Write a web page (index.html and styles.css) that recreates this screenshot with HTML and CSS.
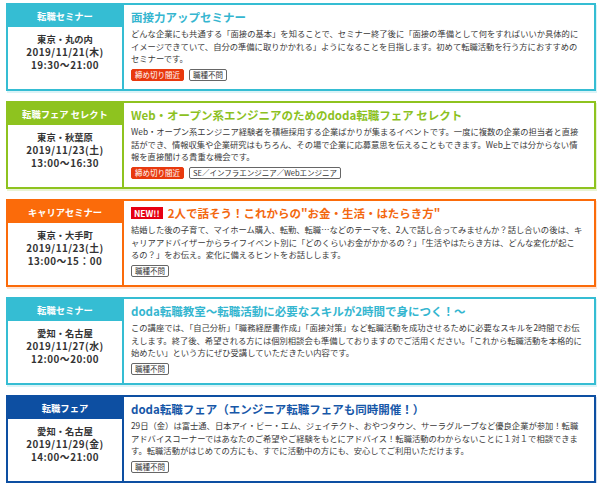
FILE: index.html
```html
<!DOCTYPE html>
<html lang="ja">
<head>
<meta charset="utf-8">
<title>イベント一覧</title>
<link rel="stylesheet" href="styles.css">
</head>
<body>
<div class="list">
  <div class="card teal">
    <div class="side">
      <div class="side-head">転職セミナー</div>
      <div class="side-body">
        <div>東京・丸の内</div>
        <div class="num">2019/11/21(木)</div>
        <div class="num">19:30〜21:00</div>
      </div>
    </div>
    <div class="main">
      <div class="title">面接力アップセミナー</div>
      <p class="desc">どんな企業にも共通する「面接の基本」を知ることで、セミナー終了後に「面接の準備として何をすればいいか具体的にイメージできていて、自分の準備に取りかかれる」ようになることを目指します。初めて転職活動を行う方におすすめのセミナーです。</p>
      <div class="tags"><span class="tag tag-red">締め切り間近</span><span class="tag">職種不問</span></div>
    </div>
  </div>

  <div class="card green">
    <div class="side">
      <div class="side-head">転職フェア セレクト</div>
      <div class="side-body">
        <div>東京・秋葉原</div>
        <div class="num">2019/11/23(土)</div>
        <div class="num">13:00〜16:30</div>
      </div>
    </div>
    <div class="main">
      <div class="title">Web・オープン系エンジニアのためのdoda転職フェア セレクト</div>
      <p class="desc">Web・オープン系エンジニア経験者を積極採用する企業ばかりが集まるイベントです。一度に複数の企業の担当者と直接話ができ、情報収集や企業研究はもちろん、その場で企業に応募意思を伝えることもできます。Web上では分からない情報を直接聞ける貴重な機会です。</p>
      <div class="tags"><span class="tag tag-red">締め切り間近</span><span class="tag">SE／インフラエンジニア／Webエンジニア</span></div>
    </div>
  </div>

  <div class="card orange">
    <div class="side">
      <div class="side-head">キャリアセミナー</div>
      <div class="side-body">
        <div>東京・大手町</div>
        <div class="num">2019/11/23(土)</div>
        <div class="num">13:00〜15：00</div>
      </div>
    </div>
    <div class="main">
      <div class="title"><span class="new">NEW!!</span>2人で話そう！これからの"お金・生活・はたらき方"</div>
      <p class="desc">結婚した後の子育て、マイホーム購入、転勤、転職…などのテーマを、2人で話し合ってみませんか？話し合いの後は、キャリアアドバイザーからライフイベント別に「どのくらいお金がかかるの？」「生活やはたらき方は、どんな変化が起こるの？」をお伝え。変化に備えるヒントをお話しします。</p>
      <div class="tags"><span class="tag">職種不問</span></div>
    </div>
  </div>

  <div class="card teal">
    <div class="side">
      <div class="side-head">転職セミナー</div>
      <div class="side-body">
        <div>愛知・名古屋</div>
        <div class="num">2019/11/27(水)</div>
        <div class="num">12:00〜20:00</div>
      </div>
    </div>
    <div class="main">
      <div class="title">doda転職教室〜転職活動に必要なスキルが2時間で身につく！〜</div>
      <p class="desc">この講座では、「自己分析」「職務経歴書作成」「面接対策」など転職活動を成功させるために必要なスキルを2時間でお伝えします。終了後、希望される方には個別相談会も準備しておりますのでご活用ください。「これから転職活動を本格的に始めたい」という方にぜひ受講していただきたい内容です。</p>
      <div class="tags"><span class="tag">職種不問</span></div>
    </div>
  </div>

  <div class="card blue">
    <div class="side">
      <div class="side-head">転職フェア</div>
      <div class="side-body">
        <div>愛知・名古屋</div>
        <div class="num">2019/11/29(金)</div>
        <div class="num">14:00〜21:00</div>
      </div>
    </div>
    <div class="main">
      <div class="title">doda転職フェア（エンジニア転職フェアも同時開催！）</div>
      <p class="desc">29日（金）は富士通、日本アイ・ビー・エム、ジェイテクト、おやつタウン、サーラグループなど優良企業が参加！転職アドバイスコーナーではあなたのご希望やご経験をもとにアドバイス！転職活動のわからないことに１対１で相談できます。転職活動がはじめての方にも、すでに活動中の方にも、安心してご利用いただけます。</p>
      <div class="tags"><span class="tag">職種不問</span></div>
    </div>
  </div>
</div>
</body>
</html>
```
FILE: styles.css
```css
html, body {
  margin: 0;
  padding: 0;
  background: #fff;
}
body {
  font-family: "Noto Sans CJK JP", "Noto Sans", sans-serif;
  color: #333;
}
.list {
  display: flex;
  flex-direction: column;
  gap: 10px;
  padding: 3px 3px 0 6px;
}
.card {
  --c: #35bdd3;
  --shadow: rgba(53, 189, 211, 0.18);
  display: flex;
  width: 590px;
  height: 88px;
  box-sizing: border-box;
  border: 2px solid var(--c);
  box-shadow: 1px 2px 0 var(--shadow);
}
.card.teal { --c: #35bdd3; --shadow: rgba(53, 189, 211, 0.18); --t: #35b6d0; }
.card.green { --c: #8ec31f; --shadow: rgba(142, 195, 31, 0.2); --t: #8cc11f; }
.card.orange { --c: #fb6b0a; --shadow: rgba(251, 107, 10, 0.18); --t: #f3680f; }
.card.blue { --c: #0d4fa2; --shadow: rgba(13, 79, 162, 0.18); --t: #1657a8; }

.side {
  width: 116px;
  flex: none;
  box-sizing: border-box;
  border-right: 2px solid var(--c);
  display: flex;
  flex-direction: column;
}
.side-head {
  height: 22px;
  background: var(--c);
  color: #fff;
  font-weight: bold;
  font-size: 9.3px;
  display: flex;
  align-items: center;
  justify-content: center;
}
.side-body {
  flex: 1;
  padding-top: 6px;
  text-align: center;
  font-weight: bold;
  font-size: 9.3px;
  line-height: 13px;
  color: #333;
}
.side-body .num {
  font-size: 9.8px;
  letter-spacing: 0.5px;
}
.main {
  flex: 1;
  min-width: 0;
  padding: 3px 11px 0 7px;
}
.title {
  font-size: 11.5px;
  line-height: 18px;
  font-weight: bold;
  color: var(--t);
  white-space: nowrap;
  display: flex;
  align-items: center;
}
.new {
  background: #e60012;
  color: #fff;
  font-size: 8.5px;
  line-height: 12px;
  padding: 0 3px;
  margin-right: 5px;
  font-weight: bold;
}
.desc {
  margin: 1px 0 0;
  font-size: 8.3px;
  line-height: 12.5px;
  color: #3a3a3a;
}
.tags {
  display: flex;
  gap: 5px;
  margin-top: 4.5px;
}
.tag {
  height: 12px;
  box-sizing: border-box;
  border: 1px solid #666;
  border-radius: 2px;
  padding: 0 3px;
  font-size: 7.5px;
  line-height: 10px;
  color: #333;
  display: flex;
  align-items: center;
  background: #fff;
}
.tag-red {
  background: #e8390e;
  border-color: #e8390e;
  color: #fff;
}
```
